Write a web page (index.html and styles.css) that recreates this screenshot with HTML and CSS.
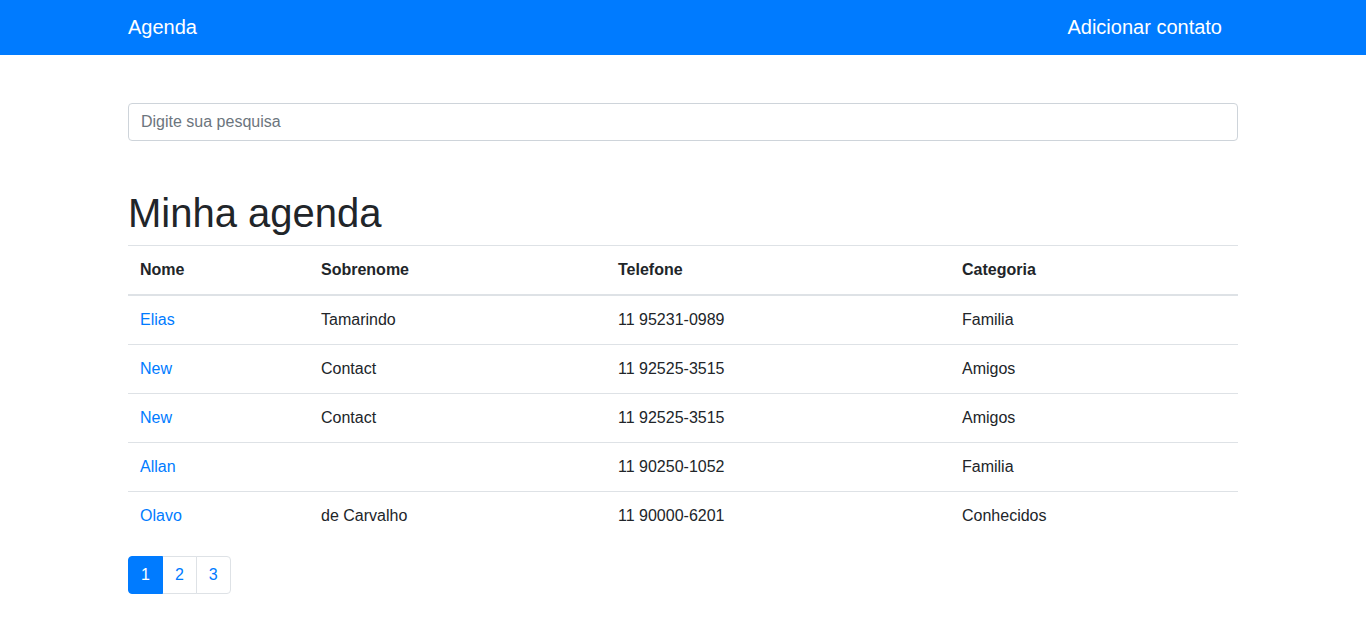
FILE: index.html
```html
<!DOCTYPE html>
<html lang="pt-br">
<head>
<meta charset="utf-8">
<title>Agenda</title>
<link rel="stylesheet" href="styles.css">
</head>
<body>
<nav class="navbar">
  <div class="container nav-inner">
    <a class="brand" href="#">Agenda</a>
    <a class="nav-link" href="#">Adicionar contato</a>
  </div>
</nav>
<main class="container">
  <input class="search" type="text" placeholder="Digite sua pesquisa">
  <h1 class="title">Minha agenda</h1>
  <table class="table">
    <thead>
      <tr><th class="c1">Nome</th><th class="c2">Sobrenome</th><th class="c3">Telefone</th><th class="c4">Categoria</th></tr>
    </thead>
    <tbody>
      <tr><td><a href="#">Elias</a></td><td>Tamarindo</td><td>11 95231-0989</td><td>Familia</td></tr>
      <tr><td><a href="#">New</a></td><td>Contact</td><td>11 92525-3515</td><td>Amigos</td></tr>
      <tr><td><a href="#">New</a></td><td>Contact</td><td>11 92525-3515</td><td>Amigos</td></tr>
      <tr><td><a href="#">Allan</a></td><td></td><td>11 90250-1052</td><td>Familia</td></tr>
      <tr><td><a href="#">Olavo</a></td><td>de Carvalho</td><td>11 90000-6201</td><td>Conhecidos</td></tr>
    </tbody>
  </table>
  <ul class="pagination">
    <li class="page active"><span>1</span></li>
    <li class="page"><a href="#">2</a></li>
    <li class="page"><a href="#">3</a></li>
  </ul>
</main>
</body>
</html>
```
FILE: styles.css
```css
* { box-sizing: border-box; }
html, body { margin: 0; padding: 0; }
body {
  font-family: "Liberation Sans", Arial, sans-serif;
  font-size: 16px;
  line-height: 1.5;
  color: #212529;
  background: #fff;
}
a { color: #007bff; text-decoration: none; }
.container {
  max-width: 1140px;
  margin: 0 auto;
  padding: 0 15px;
}
.navbar {
  background: #007bff;
  height: 55px;
}
.nav-inner {
  display: flex;
  align-items: center;
  justify-content: space-between;
  height: 55px;
  padding-bottom: 2px;
}
.brand {
  color: #fff;
  font-size: 20px;
  line-height: 30px;
}
.nav-link {
  color: #fff;
  font-size: 20px;
  line-height: 30px;
  padding: 0 16px;
}
.search {
  display: block;
  width: 100%;
  height: 38px;
  margin-top: 48px;
  padding: 6px 12px;
  font-family: inherit;
  font-size: 16px;
  line-height: 1.5;
  color: #495057;
  border: 1px solid #ced4da;
  border-radius: 4px;
  background: #fff;
}
.search::placeholder { color: #6c757d; opacity: 1; }
.title {
  font-size: 40px;
  font-weight: 500;
  line-height: 1.2;
  margin: 48px 0 8px;
}
.table {
  width: 100%;
  border-collapse: collapse;
  margin-bottom: 16px;
}
.table th, .table td {
  padding: 12px;
  text-align: left;
  vertical-align: top;
  border-top: 1px solid #dee2e6;
}
.table thead th {
  font-weight: 700;
  border-bottom: 2px solid #dee2e6;
}
.c1 { width: 181px; }
.c2 { width: 297px; }
.c3 { width: 344px; }
.c4 { width: 288px; }
.pagination {
  display: flex;
  list-style: none;
  margin: 0;
  padding: 0;
}
.page a, .page span {
  display: block;
  padding: 8px 12px;
  line-height: 20px;
  border: 1px solid #dee2e6;
  margin-left: -1px;
  color: #007bff;
  background: #fff;
}
.page:first-child a, .page:first-child span {
  margin-left: 0;
  border-radius: 4px 0 0 4px;
}
.page:last-child a { border-radius: 0 4px 4px 0; }
.page.active span {
  background: #007bff;
  border-color: #007bff;
  color: #fff;
  position: relative;
  z-index: 1;
}
```
